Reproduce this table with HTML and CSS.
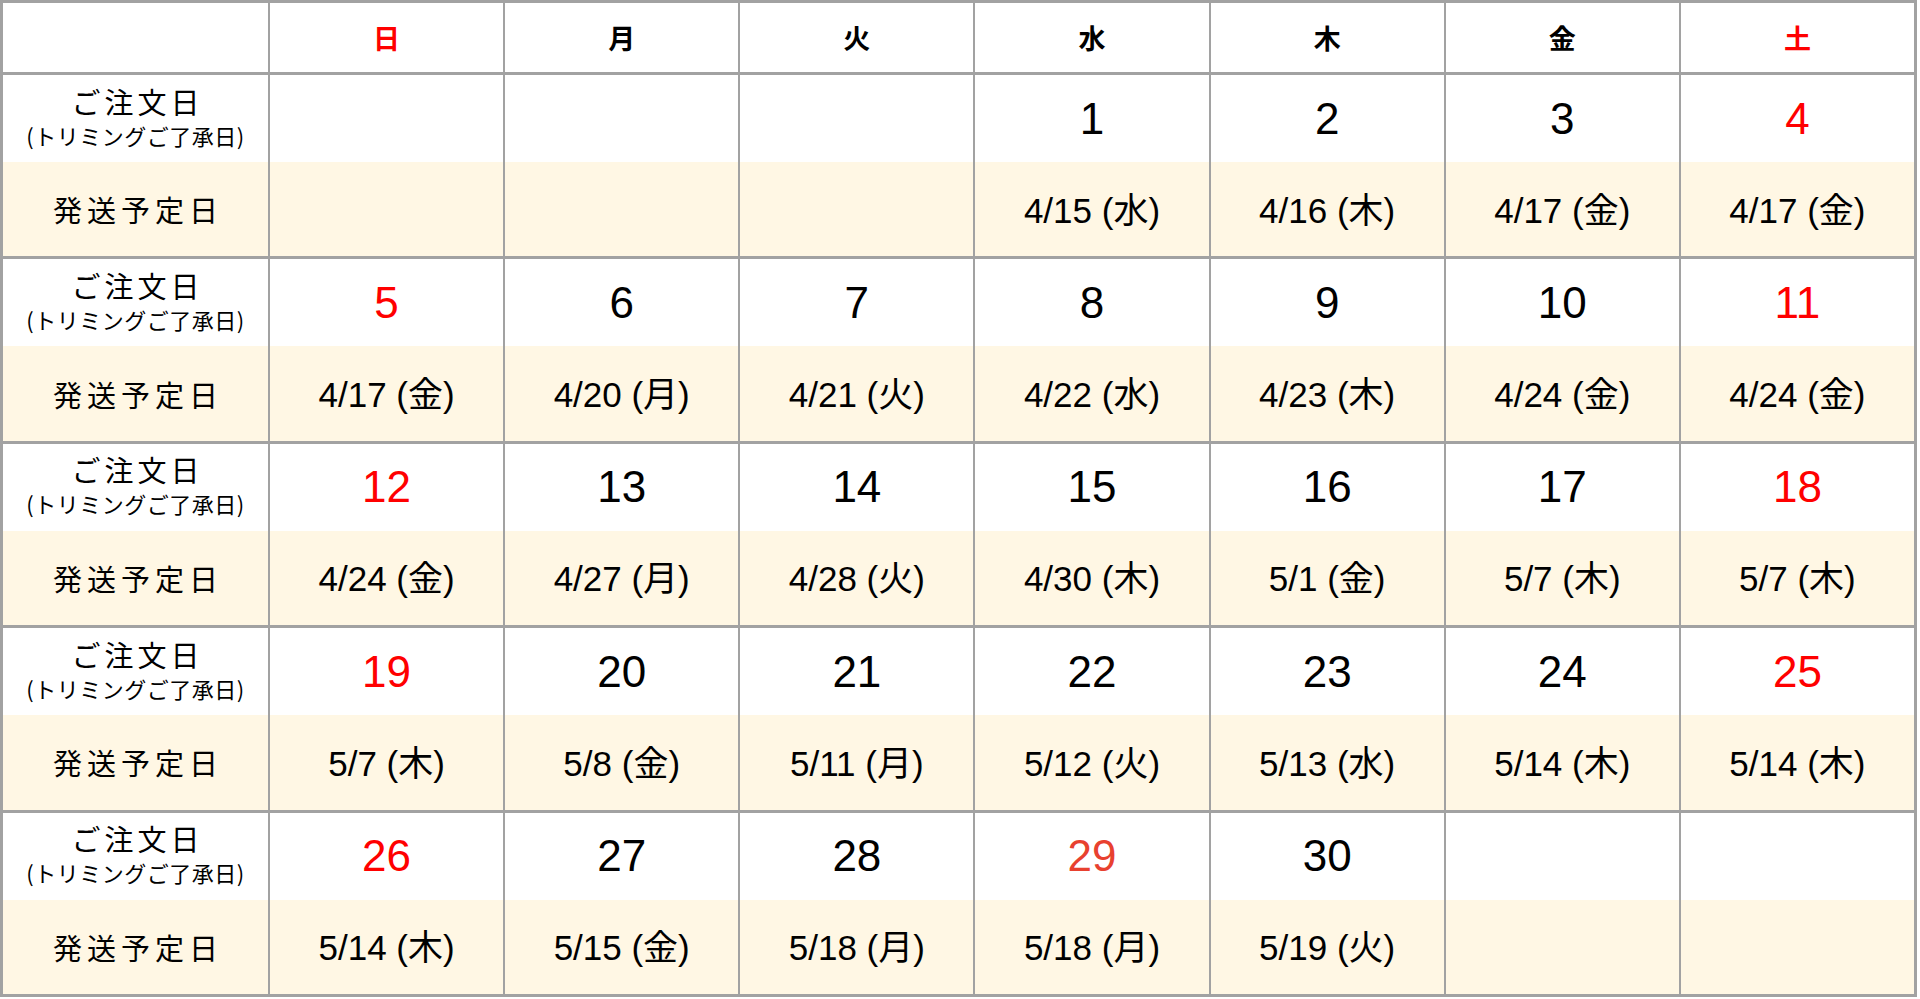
FILE: index.html
```html
<!DOCTYPE html>
<html lang="ja">
<head>
<meta charset="utf-8">
<title>発送予定カレンダー</title>
<link rel="stylesheet" href="styles.css">
</head>
<body>
<div class="cal">
  <div class="hdr">
    <div class="h"></div>
    <div class="h red">日</div>
    <div class="h">月</div>
    <div class="h">火</div>
    <div class="h">水</div>
    <div class="h">木</div>
    <div class="h">金</div>
    <div class="h red">土</div>
  </div>

  <div class="week">
    <div class="lbl"><span class="l1">ご注文日</span><span class="l2">(トリミングご了承日)</span></div>
    <div class="d"></div>
    <div class="d"></div>
    <div class="d"></div>
    <div class="d">1</div>
    <div class="d">2</div>
    <div class="d">3</div>
    <div class="d red">4</div>
    <div class="slbl">発送予定日</div>
    <div class="s"></div>
    <div class="s"></div>
    <div class="s"></div>
    <div class="s">4/15 (水)</div>
    <div class="s">4/16 (木)</div>
    <div class="s">4/17 (金)</div>
    <div class="s">4/17 (金)</div>
  </div>

  <div class="week">
    <div class="lbl"><span class="l1">ご注文日</span><span class="l2">(トリミングご了承日)</span></div>
    <div class="d red">5</div>
    <div class="d">6</div>
    <div class="d">7</div>
    <div class="d">8</div>
    <div class="d">9</div>
    <div class="d">10</div>
    <div class="d red">11</div>
    <div class="slbl">発送予定日</div>
    <div class="s">4/17 (金)</div>
    <div class="s">4/20 (月)</div>
    <div class="s">4/21 (火)</div>
    <div class="s">4/22 (水)</div>
    <div class="s">4/23 (木)</div>
    <div class="s">4/24 (金)</div>
    <div class="s">4/24 (金)</div>
  </div>

  <div class="week">
    <div class="lbl"><span class="l1">ご注文日</span><span class="l2">(トリミングご了承日)</span></div>
    <div class="d red">12</div>
    <div class="d">13</div>
    <div class="d">14</div>
    <div class="d">15</div>
    <div class="d">16</div>
    <div class="d">17</div>
    <div class="d red">18</div>
    <div class="slbl">発送予定日</div>
    <div class="s">4/24 (金)</div>
    <div class="s">4/27 (月)</div>
    <div class="s">4/28 (火)</div>
    <div class="s">4/30 (木)</div>
    <div class="s">5/1 (金)</div>
    <div class="s">5/7 (木)</div>
    <div class="s">5/7 (木)</div>
  </div>

  <div class="week">
    <div class="lbl"><span class="l1">ご注文日</span><span class="l2">(トリミングご了承日)</span></div>
    <div class="d red">19</div>
    <div class="d">20</div>
    <div class="d">21</div>
    <div class="d">22</div>
    <div class="d">23</div>
    <div class="d">24</div>
    <div class="d red">25</div>
    <div class="slbl">発送予定日</div>
    <div class="s">5/7 (木)</div>
    <div class="s">5/8 (金)</div>
    <div class="s">5/11 (月)</div>
    <div class="s">5/12 (火)</div>
    <div class="s">5/13 (水)</div>
    <div class="s">5/14 (木)</div>
    <div class="s">5/14 (木)</div>
  </div>

  <div class="week">
    <div class="lbl"><span class="l1">ご注文日</span><span class="l2">(トリミングご了承日)</span></div>
    <div class="d red">26</div>
    <div class="d">27</div>
    <div class="d">28</div>
    <div class="d holiday">29</div>
    <div class="d">30</div>
    <div class="d"></div>
    <div class="d"></div>
    <div class="slbl">発送予定日</div>
    <div class="s">5/14 (木)</div>
    <div class="s">5/15 (金)</div>
    <div class="s">5/18 (月)</div>
    <div class="s">5/18 (月)</div>
    <div class="s">5/19 (火)</div>
    <div class="s"></div>
    <div class="s"></div>
  </div>
</div>
</body>
</html>
```

FILE: styles.css
```css
html, body {
  margin: 0;
  padding: 0;
  background: #ffffff;
}

body {
  font-family: "Liberation Sans", Arial, "Noto Sans CJK JP", sans-serif;
  color: #000000;
}

.cal {
  width: 1917px;
  box-sizing: border-box;
  border: 3px solid #a2a2a2;
  background: #a2a2a2;
  display: flex;
  flex-direction: column;
  gap: 3px;
}

.hdr,
.week {
  display: grid;
  grid-template-columns: 265px repeat(7, 1fr);
  column-gap: 2px;
}

.hdr {
  height: 69px;
}

.week {
  grid-template-rows: 87px 94.4px;
}

.h,
.d,
.lbl,
.s,
.slbl {
  display: flex;
  align-items: center;
  justify-content: center;
}

.h {
  background: #ffffff;
  font-size: 27px;
  font-weight: bold;
  font-family: "Noto Sans CJK JP", sans-serif;
}

.d {
  background: #ffffff;
  font-size: 44px;
}

.lbl {
  background: #ffffff;
  flex-direction: column;
  padding-bottom: 4px;
  box-sizing: border-box;
}

.l1 {
  font-family: "Noto Sans CJK JP", sans-serif;
  font-size: 29px;
  line-height: 36px;
  letter-spacing: 4px;
  padding-left: 4px;
}

.l2 {
  font-family: "Noto Sans CJK JP", sans-serif;
  font-size: 22px;
  line-height: 32px;
  letter-spacing: 0.5px;
}

.slbl {
  background: #fff7e4;
  font-family: "Noto Sans CJK JP", sans-serif;
  font-size: 29px;
  letter-spacing: 5px;
  padding-left: 5px;
}

.s {
  background: #fff7e4;
  font-size: 35px;
  padding-bottom: 4px;
  box-sizing: border-box;
}

.red {
  color: #ff0000;
}

.holiday {
  color: #e8412f;
}
```
